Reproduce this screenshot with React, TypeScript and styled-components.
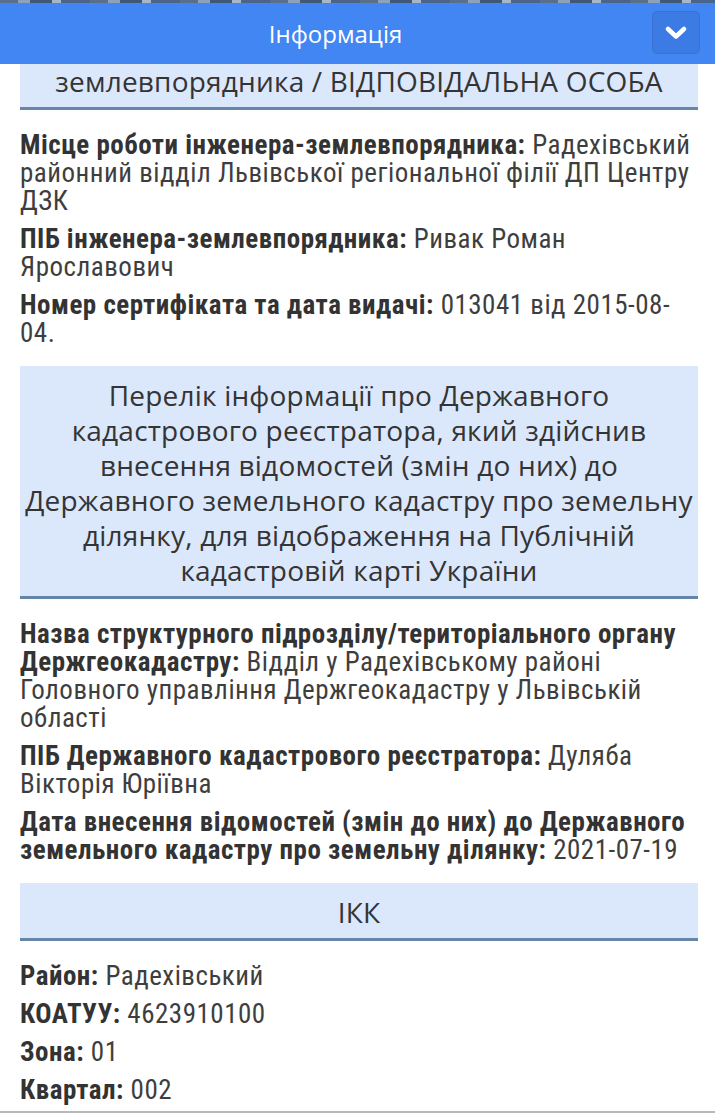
import React from "react";
import styled, { createGlobalStyle } from "styled-components";

const GlobalStyle = createGlobalStyle`
  html, body { margin: 0; padding: 0; background: #ffffff; }
  body { width: 715px; height: 1113px; overflow: hidden; }
  * { box-sizing: border-box; }
`;

const Page = styled.div`
  width: 715px;
  height: 1113px;
  display: flex;
  flex-direction: column;
  background: #ffffff;
  overflow: hidden;
`;

const MapStrip = styled.div`
  height: 3px;
  flex: none;
  background: repeating-linear-gradient(
    90deg,
    #5a6f8c 0 18px,
    #8fa1b8 18px 30px,
    #3f5878 30px 52px,
    #a9b6c6 52px 61px,
    #4a648a 61px 90px
  );
`;

const TopBar = styled.header`
  flex: none;
  height: 61px;
  background: #4286f4;
  display: flex;
  align-items: center;
  justify-content: center;
  padding-right: 44px;
  position: relative;
`;

const Title = styled.h1`
  margin: 0;
  font-family: "Open Sans", "Noto Sans", sans-serif;
  font-stretch: 88%;
  font-weight: 400;
  font-size: 24px;
  color: #ffffff;
`;

const ToggleButton = styled.button`
  position: absolute;
  right: 15px;
  top: 8px;
  width: 48px;
  height: 43px;
  border-radius: 5px;
  border: 1px solid #3a72d2;
  background: #3c7be3;
  display: flex;
  align-items: center;
  justify-content: center;
  padding: 0;
  cursor: pointer;
`;

const Content = styled.main`
  flex: 1;
  display: flex;
  flex-direction: column;
  padding: 0 17px 0 20px;
  overflow: hidden;
`;

const SectionHeader = styled.h2<{ $clipped?: boolean }>`
  margin: ${(p) => (p.$clipped ? "0" : "19px")} 0 21px;
  padding: ${(p) => (p.$clipped ? "0" : "12px")} 0 8px;
  background: #dbe7fb;
  border-bottom: 3px solid #6586a8;
  font-family: "Open Sans", "Noto Sans", sans-serif;
  font-weight: 400;
  font-size: 28px;
  line-height: 35px;
  letter-spacing: 0.2px;
  color: #343434;
  text-align: center;
`;

const FieldList = styled.div`
  display: flex;
  flex-direction: column;
  gap: 10px;
`;

const Field = styled.p`
  margin: 0;
  font-family: Roboto, "Liberation Sans", sans-serif;
  font-stretch: condensed;
  font-size: 27px;
  line-height: 28px;
  letter-spacing: 0.5px;
  color: #333333;
`;

const Label = styled.b`
  font-weight: 700;
  color: #333333;
`;

const Value = styled.span`
  font-weight: 400;
  color: #3e3e3e;
`;

const BottomRule = styled.div`
  flex: none;
  height: 2px;
  background: #b8b8b8;
`;

const Chevron = () => (
  <svg width="22" height="14" viewBox="0 0 22 14" aria-hidden="true">
    <path
      d="M3 3 L11 10.5 L19 3"
      fill="none"
      stroke="#ffffff"
      strokeWidth="4.5"
      strokeLinecap="round"
      strokeLinejoin="round"
    />
  </svg>
);

type Item = { label: string; value: string };

const Fields = ({ items }: { items: Item[] }) => (
  <FieldList>
    {items.map((it) => (
      <Field key={it.label}>
        <Label>{it.label}</Label> <Value>{it.value}</Value>
      </Field>
    ))}
  </FieldList>
);

const engineer: Item[] = [
  {
    label: "Місце роботи інженера-землевпорядника:",
    value: "Радехівський районний відділ Львівської регіональної філії ДП Центру ДЗК",
  },
  { label: "ПІБ інженера-землевпорядника:", value: "Ривак Роман Ярославович" },
  { label: "Номер сертифіката та дата видачі:", value: "013041 від 2015-08-04." },
];

const registrar: Item[] = [
  {
    label: "Назва структурного підрозділу/територіального органу Держгеокадастру:",
    value: "Відділ у Радехівському районі Головного управління Держгеокадастру у Львівській області",
  },
  { label: "ПІБ Державного кадастрового реєстратора:", value: "Дуляба Вікторія Юріївна" },
  {
    label: "Дата внесення відомостей (змін до них) до Державного земельного кадастру про земельну ділянку:",
    value: "2021-07-19",
  },
];

const ikk: Item[] = [
  { label: "Район:", value: "Радехівський" },
  { label: "КОАТУУ:", value: "4623910100" },
  { label: "Зона:", value: "01" },
  { label: "Квартал:", value: "002" },
];

export default function App() {
  return (
    <Page>
      <GlobalStyle />
      <MapStrip />
      <TopBar>
        <Title>Інформація</Title>
        <ToggleButton aria-label="Згорнути">
          <Chevron />
        </ToggleButton>
      </TopBar>
      <Content>
        <SectionHeader $clipped>землевпорядника / ВІДПОВІДАЛЬНА ОСОБА</SectionHeader>
        <Fields items={engineer} />
        <SectionHeader>
          Перелік інформації про Державного кадастрового реєстратора, який здійснив внесення
          відомостей (змін до них) до Державного земельного кадастру про земельну ділянку, для
          відображення на Публічній кадастровій карті України
        </SectionHeader>
        <Fields items={registrar} />
        <SectionHeader>ІКК</SectionHeader>
        <Fields items={ikk} />
      </Content>
      <BottomRule />
    </Page>
  );
}
